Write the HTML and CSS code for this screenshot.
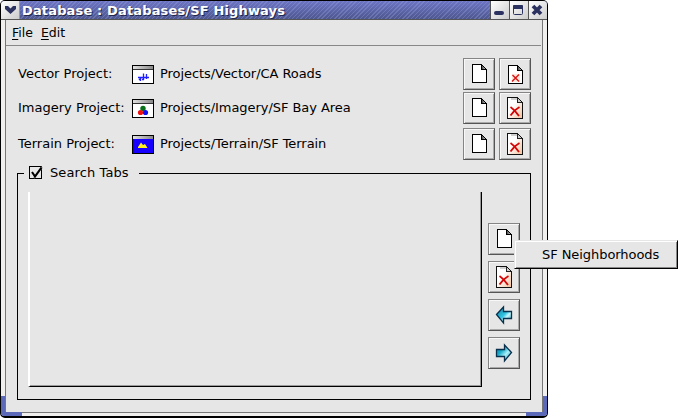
FILE: index.html
```
<!DOCTYPE html>
<html lang="en">
<head>
<meta charset="utf-8">
<title>Database : Databases/SF Highways</title>
<link rel="stylesheet" href="styles.css">
</head>
<body>
<svg class="defs" width="0" height="0" shape-rendering="crispEdges">
  <defs>
    <linearGradient id="fold"><stop offset="0" stop-color="#222"/><stop offset="1" stop-color="#ddd"/></linearGradient>
    <linearGradient id="peach" x1="0" y1="0" x2="1" y2="1"><stop offset=".4" stop-color="#fff"/><stop offset="1" stop-color="#f4c09a"/></linearGradient>
    <linearGradient id="bar"><stop offset="0" stop-color="#e0e0e0"/><stop offset="1" stop-color="#888"/></linearGradient>
    <linearGradient id="aqua" x1="0" y1="0" x2="1" y2="1"><stop offset="0" stop-color="#087c9c"/><stop offset=".5" stop-color="#35c5e3"/><stop offset=".65" stop-color="#c8f8ff"/><stop offset="1" stop-color="#078cac"/></linearGradient>
    <linearGradient id="aqua-right" x1="0" y1="0" x2="1" y2="1"><stop offset="0" stop-color="#0786a4"/><stop offset=".35" stop-color="#18aac8"/><stop offset=".6" stop-color="#a8f0fa"/><stop offset="1" stop-color="#078cac"/></linearGradient>
    <symbol id="page" viewBox="0 0 32 32"><path d="M9.500 6.500H18.500L23.500 11.500V24.500H9.500Z" fill="#fff" stroke="#000"/><path d="M18 7L23 12H18Z" fill="url(#fold)"/><path d="M18.500 7V11.500H23" fill="none" stroke="#000"/></symbol>
    <symbol id="page-x-small" viewBox="0 0 32 32"><path d="M9.500 7.500H18.500L23.500 12.500V25.500H9.500Z" fill="#fff" stroke="#000"/><path d="M18 8L23 13H18Z" fill="url(#fold)"/><path d="M18.500 8V12.500H23" fill="none" stroke="#000"/><rect x="13" y="16" width="8" height="8" fill="#fbe7dc"/><path d="M13.500 17L20 23.500M20 16.500L13 23.500" stroke="#d91414" stroke-width="1.400" shape-rendering="auto"/></symbol>
    <symbol id="page-x" viewBox="0 0 32 32"><path d="M8.500 5.500H18.500L23.500 10.500V26.500H8.500Z" fill="url(#peach)" stroke="#111"/><path d="M18.500 6V10.500H23" fill="#ccc" stroke="#222"/><path d="M12 6H18V8H12Z" fill="#777" opacity=".35"/><path d="M11.500 15Q16 18 20 24M20.500 15Q15 18 11.500 23.500" fill="none" stroke="#d40808" stroke-width="1.800" shape-rendering="auto"/></symbol>
    <symbol id="arrow" viewBox="0 0 32 32"><path d="M8.500 15.500L15.500 8V12.500H23.500V19.500H15.500V24Z" fill="url(#aqua)" stroke="#082f4c" stroke-width="1.300" shape-rendering="auto"/></symbol>
    <symbol id="arrow-right" viewBox="0 0 32 32"><path d="M23.500 15.500L16.500 8V12.500H8.500V19.500H16.500V24Z" fill="url(#aqua-right)" stroke="#082f4c" stroke-width="1.300" shape-rendering="auto"/></symbol>
    <symbol id="frame" viewBox="0 0 22 19"><rect x=".5" y=".5" width="21" height="18" fill="#fff" stroke="#000"/><rect x="1" y="1" width="20" height="3" fill="url(#bar)"/><path d="M1 4.500H21" stroke="#000" stroke-opacity=".8"/></symbol>
  </defs>
</svg>
<div class="desktop">
  <div class="window">
    <header class="titlebar">
      <div class="sys"><svg width="18" height="18"><path d="M4 5H7L9.500 7.500L12 5H15V8L9.500 13L4 8Z" fill="#2c3260"/></svg></div>
      <h1><svg class="title" width="470" height="18"><text class="shade" x="3" y="15" textLength="263">Database : Databases/SF Highways</text><text x="2" y="14" textLength="263">Database : Databases/SF Highways</text></svg></h1>
      <div class="ctl"><svg width="18" height="18"><rect x="3" y="10" width="10" height="4" rx="2" fill="#2c3260"/></svg></div>
      <div class="ctl"><svg width="18" height="18"><rect x="3.500" y="4.500" width="9" height="9" rx="1" fill="none" stroke="#2c3260"/><rect x="3" y="4" width="10" height="4" rx="1" fill="#2c3260"/></svg></div>
      <div class="ctl"><svg width="18" height="18"><path d="M4 5L12 13M12 5L4 13" stroke="#2c3260" stroke-width="3.800"/></svg></div>
    </header>
    <div class="body">
      <nav class="menubar"><span><u>F</u>ile</span><span><u>E</u>dit</span></nav>
      <main>
        <section class="projects">
          <div class="row">
            <span class="label">Vector Project:</span>
            <svg class="thumb" width="22" height="19"><use href="#frame"/><path d="M6 12.500H17M8.500 12V16M7 15L9 13M11.500 8.500V15M14.500 9V14M10 14.500H12" fill="none" stroke="#2020ff" stroke-width="1.300"/></svg>
            <span class="path">Projects/Vector/CA Roads</span>
            <button><svg shape-rendering="crispEdges"><use href="#page"/></svg></button><button><svg shape-rendering="crispEdges"><use href="#page-x-small"/></svg></button>
          </div>
          <div class="row">
            <span class="label">Imagery Project:</span>
            <svg class="thumb" width="22" height="19"><use href="#frame"/><circle cx="11" cy="9.500" r="2.700" fill="#087018"/><circle cx="8.500" cy="13.500" r="2.600" fill="#f01010"/><circle cx="13.500" cy="13.500" r="2.600" fill="#1010f0"/></svg>
            <span class="path">Projects/Imagery/SF Bay Area</span>
            <button><svg shape-rendering="crispEdges"><use href="#page"/></svg></button><button><svg shape-rendering="crispEdges"><use href="#page-x"/></svg></button>
          </div>
          <div class="row">
            <span class="label">Terrain Project:</span>
            <svg class="thumb" width="22" height="19"><use href="#frame"/><rect x="1" y="4" width="20" height="14" fill="#1800ff"/><path d="M6 13V12L9 7.500L11 10L13 9L15.500 13Z" fill="#fff020"/></svg>
            <span class="path">Projects/Terrain/SF Terrain</span>
            <button><svg shape-rendering="crispEdges"><use href="#page"/></svg></button><button><svg shape-rendering="crispEdges"><use href="#page-x"/></svg></button>
          </div>
        </section>
        <fieldset>
          <legend><svg width="14" height="14"><rect width="13" height="13" fill="#000"/><path d="M1 1H12V12H1Z" fill="#e8e8e8"/><path d="M5 12L13 1" stroke="#999" stroke-width="2"/><path d="M3 6L6 10.500L12.500 1.500" fill="none" stroke="#000" stroke-width="2.100"/></svg><span>Search Tabs</span></legend>
          <div class="tabs">
            <div class="pane"></div>
            <div class="side">
              <button><svg shape-rendering="crispEdges"><use href="#page"/></svg></button>
              <button><svg shape-rendering="crispEdges"><use href="#page-x"/></svg></button>
              <button><svg><use href="#arrow"/></svg></button>
              <button><svg><use href="#arrow-right"/></svg></button>
            </div>
          </div>
        </fieldset>
      </main>
    </div>
    <i class="grip left"></i><i class="grip right"></i>
  </div>
  <div class="popup">SF Neighborhoods</div>
</div>
</body>
</html>
```
FILE: styles.css
```
* { box-sizing: border-box; }
body { margin: 0; background: #fff; color: #000; font: 13px/16px "DejaVu Sans", sans-serif; letter-spacing: -.06px; overflow: hidden; }
.defs { position: absolute; }
.desktop { position: relative; width: 678px; height: 418px; }
.window { position: relative; display: flex; flex-direction: column; width: 548px; height: 418px; border: 1px solid #000; border-bottom-width: 2px; border-radius: 5px; background: #f1eeee; overflow: hidden; }
.titlebar { display: flex; height: 19px; border-bottom: 1px solid #555; background: repeating-linear-gradient(135deg, transparent 0 2px, rgba(160,170,225,.3) 2px 3px), linear-gradient(#6d75c4, #4e578f); }
.sys, .ctl { flex: none; width: 19px; height: 18px; background: linear-gradient(135deg, #fff, #ccc); border-right: 1px solid #999; }
.sys svg, .ctl svg { display: block; }
.ctl { border-right: 0; border-left: 1px solid #555; }
h1 { flex: 1; margin: 0; min-width: 0; overflow: hidden; }
.title { display: block; font: bold 13px "DejaVu Sans", sans-serif; letter-spacing: 0; fill: #fff; }
.shade { fill: #20264d; }
.body { height: 393px; margin: 0 4px; border: 1px solid #777; border-top: 0; background: #e6e6e6; }
.menubar { display: flex; gap: 8px; height: 26px; width: 535px; padding: 5px 6px 0; border-bottom: 1px solid #888; font-size: 12.500px; letter-spacing: 0; }
.menubar u { text-underline-offset: 2px; }
.projects { padding: 12px 11px 0 12px; }
.row { display: flex; align-items: center; height: 32px; margin-bottom: 2px; }
.row:nth-child(2) { margin-bottom: 4px; }
.label { width: 114px; white-space: nowrap; letter-spacing: 0; }
.thumb { flex: none; margin-right: 6px; }
.path { flex: 1; }
button { flex: none; width: 32px; height: 32px; padding: 0; border: 1px solid; border-color: #858585 #555 #555 #858585; background: #e6e6e6; box-shadow: inset 1px 1px #f8f8f8, inset -1px -1px #aaa; }
.row button + button { margin-left: 4px; }
button svg { display: block; width: 32px; height: 32px; margin: -1px; }
fieldset { height: 235px; width: 514px; margin: 5px 0 0 11px; padding: 0; border: 1px solid #000; min-width: 0; }
legend { display: flex; align-items: flex-start; height: 17px; width: 115px; margin-left: 6px; padding: 0 0 0 5px; letter-spacing: .1px; }
legend svg { margin-top: 1px; }
legend span { margin-left: 7px; white-space: nowrap; }
.tabs { display: flex; padding: 10px 0 0 10px; }
.pane { width: 454px; height: 195px; border-left: 2px solid #fff; border-right: 1px solid #000; border-bottom: 1px solid #000; box-shadow: inset -1px -1px #999; }
.side { display: flex; flex-direction: column; gap: 6px; padding: 31px 0 0 6px; }
.grip { position: absolute; bottom: 0; width: 21px; height: 20px; border: 4px solid #5c68b8; border-top: 0; }
.grip.left { left: 0; border-right: 0; }
.grip.right { right: 0; border-left: 0; }
.popup { position: absolute; left: 514px; top: 240px; width: 164px; height: 29px; padding: 6px 0 0 27px; background: #e6e6e6; border: 1px solid; border-color: #e6e6e6 #000 #000 #e6e6e6; box-shadow: inset 1px 1px #fff, inset -1px -1px #888; white-space: nowrap; }
```
